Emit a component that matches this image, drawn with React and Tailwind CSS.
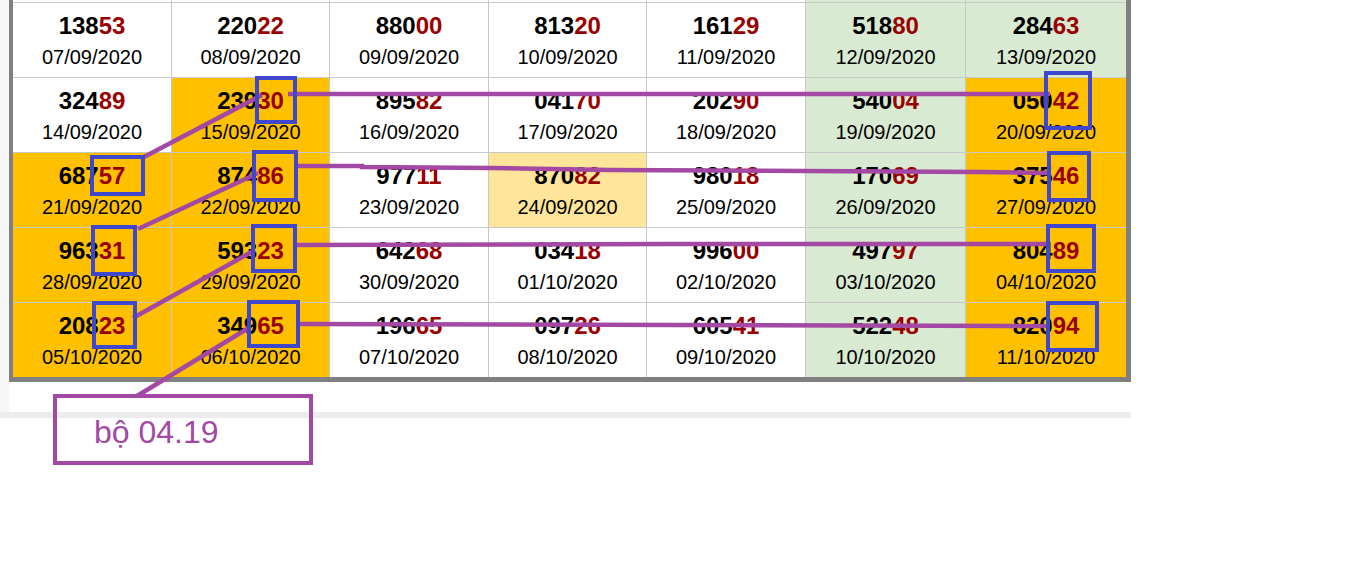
const ORANGE = "bg-[#ffc000]";
const GREEN = "bg-[#d9ead3]";
const YELLOW = "bg-[#ffe599]";
const WHITE = "bg-white";

const rows = [
    ["13853", "22022", "88000", "81320", "16129", "51880", "28463"],
    ["32489", "23930", "89582", "04170", "20290", "54004", "05042"],
    ["68757", "87486", "97711", "87082", "98018", "17069", "37546"],
    ["96331", "59323", "64268", "03418", "99600", "49797", "80489"],
    ["20823", "34965", "19665", "09726", "60541", "52248", "82094"],
];

const fills = [
    [WHITE, WHITE, WHITE, WHITE, WHITE, GREEN, GREEN],
    [WHITE, ORANGE, WHITE, WHITE, WHITE, GREEN, ORANGE],
    [ORANGE, ORANGE, WHITE, YELLOW, WHITE, GREEN, ORANGE],
    [ORANGE, ORANGE, WHITE, WHITE, WHITE, GREEN, ORANGE],
    [ORANGE, ORANGE, WHITE, WHITE, WHITE, GREEN, ORANGE],
];

function dateFor(index) {
    const d = new Date(2020, 8, 7 + index);
    const dd = String(d.getDate()).padStart(2, "0");
    const mm = String(d.getMonth() + 1).padStart(2, "0");
    return `${dd}/${mm}/${d.getFullYear()}`;
}

function Cell({ value, date, fill }) {
    return (
        <div className={`${fill} h-[74px] flex flex-col items-center pt-[9px]`}>
            <div className="text-[24px] leading-[28px] font-bold text-black">
                {value.slice(0, 3)}
                <span className="text-[#990000]">{value.slice(3)}</span>
            </div>
            <div className="mt-[5px] text-[20px] leading-[24px] text-black">{date}</div>
        </div>
    );
}

const boxes = [
    [257, 78, 38, 44],
    [1046, 73, 44, 55],
    [92, 157, 51, 37],
    [254, 152, 42, 48],
    [1049, 153, 40, 47],
    [93, 227, 42, 47],
    [253, 226, 42, 45],
    [1048, 226, 46, 45],
    [94, 303, 41, 44],
    [249, 302, 49, 44],
    [1048, 303, 49, 47],
];

function Annotations() {
    return (
        <svg className="absolute top-0 left-0 pointer-events-none" width="1354" height="564">
            <g stroke="#a349a4" strokeWidth="4.5" fill="none" strokeLinecap="butt">
                <line x1="288" y1="94" x2="1050" y2="94" />
                <line x1="142" y1="158" x2="262" y2="95" />
                <polyline points="298,166 362,166 362,167 490,168 610,170 980,172 1048,173" />
                <line x1="138" y1="229" x2="258" y2="173" />
                <polyline points="294,245 670,244 1048,244" />
                <line x1="133" y1="318" x2="255" y2="250" />
                <line x1="296" y1="324" x2="1050" y2="326" />
                <line x1="250" y1="327" x2="137" y2="396" />
            </g>
            <g stroke="#3f48cc" strokeWidth="4" fill="none">
                {boxes.map(([x, y, w, h], i) => (
                    <rect key={i} x={x} y={y} width={w} height={h} />
                ))}
            </g>
        </svg>
    );
}

export default function App() {
    return (
        <div className="relative w-[1354px] h-[564px] bg-white overflow-hidden" style={{ fontFamily: '"Liberation Sans", Arial, sans-serif' }}>
            {/* sheet */}
            <div className="w-[1131px] flex border-b-[6px] border-[#ececec]">
                <div className="w-[9px] bg-[#f6f6f6]" />
                <div className="flex-1 h-[412px] bg-white">
                    <div className="border-l-[4px] border-r-[5px] border-b-[5px] border-[#808080]">
                        <div className="grid grid-cols-[158px_157px_158px_157px_158px_159px_160px] gap-px bg-[#c8c8c8]">
                            {Array.from({ length: 7 }).map((_, c) => (
                                <div key={`top-${c}`} className={`h-[2px] ${fills[0][c]}`} />
                            ))}
                            {rows.map((row, r) =>
                                row.map((value, c) => (
                                    <Cell key={`${r}-${c}`} value={value} date={dateFor(r * 7 + c)} fill={fills[r][c]} />
                                ))
                            )}
                        </div>
                    </div>
                </div>
            </div>

            <Annotations />

            {/* label */}
            <div className="absolute left-[53px] top-[394px] w-[260px] h-[71px] border-[4px] border-[#a349a4] flex items-center pl-[37px] pt-[4px]">
                <span className="text-[32px] leading-none text-[#a349a4]">bộ 04.19</span>
            </div>
        </div>
    );
}
